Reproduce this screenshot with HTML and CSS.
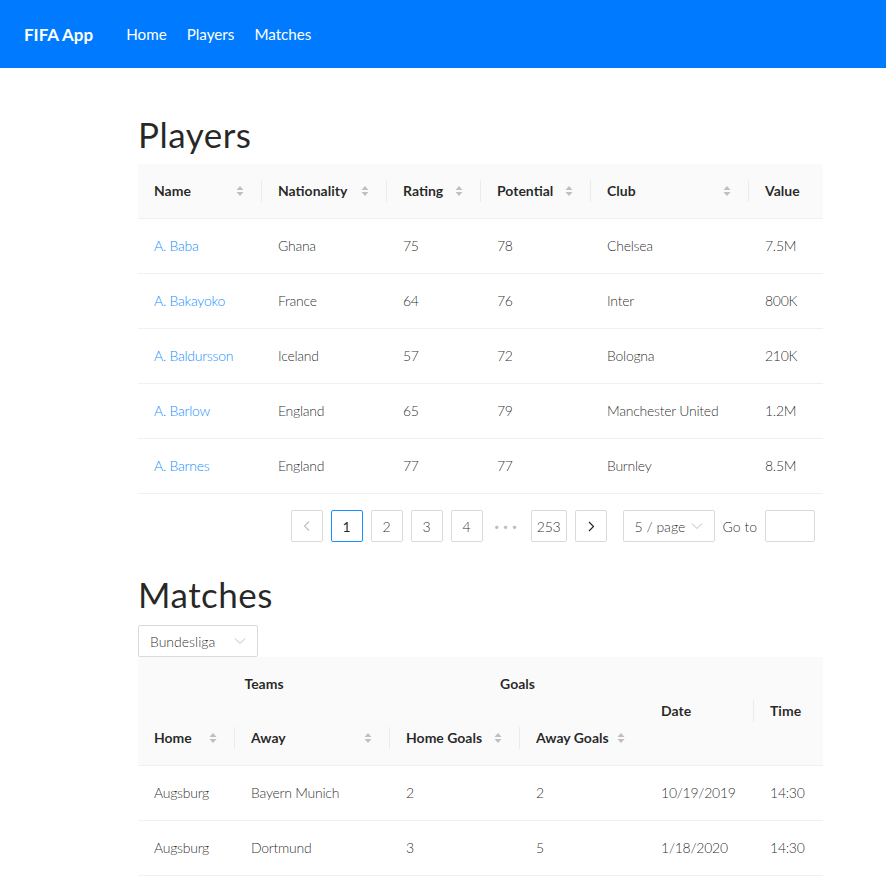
FILE: index.html
```html
<!DOCTYPE html>
<html lang="en">
<head>
<meta charset="utf-8">
<title>FIFA App</title>
<link rel="stylesheet" href="styles.css">
</head>
<body>
<nav class="navbar">
  <a class="brand" href="#">FIFA App</a>
  <a class="nav-link" href="#">Home</a>
  <a class="nav-link" href="#">Players</a>
  <a class="nav-link" href="#">Matches</a>
</nav>

<main class="content">
  <h1 class="title title-players">Players</h1>
  <table class="table players">
    <colgroup>
      <col style="width:124px"><col style="width:125px"><col style="width:94px"><col style="width:110px"><col style="width:158px"><col style="width:74px">
    </colgroup>
    <thead>
      <tr>
        <th class="div"><div class="th-in"><span>Name</span><span class="sorter"><svg width="8" height="12" viewBox="0 0 8 12"><path d="M0.5 5L4 1 7.5 5Z M0.5 7L4 11 7.5 7Z" fill="#bfbfbf"/></svg></span></div></th>
        <th class="div"><div class="th-in"><span>Nationality</span><span class="sorter"><svg width="8" height="12" viewBox="0 0 8 12"><path d="M0.5 5L4 1 7.5 5Z M0.5 7L4 11 7.5 7Z" fill="#bfbfbf"/></svg></span></div></th>
        <th class="div"><div class="th-in"><span>Rating</span><span class="sorter"><svg width="8" height="12" viewBox="0 0 8 12"><path d="M0.5 5L4 1 7.5 5Z M0.5 7L4 11 7.5 7Z" fill="#bfbfbf"/></svg></span></div></th>
        <th class="div"><div class="th-in"><span>Potential</span><span class="sorter"><svg width="8" height="12" viewBox="0 0 8 12"><path d="M0.5 5L4 1 7.5 5Z M0.5 7L4 11 7.5 7Z" fill="#bfbfbf"/></svg></span></div></th>
        <th class="div"><div class="th-in"><span>Club</span><span class="sorter"><svg width="8" height="12" viewBox="0 0 8 12"><path d="M0.5 5L4 1 7.5 5Z M0.5 7L4 11 7.5 7Z" fill="#bfbfbf"/></svg></span></div></th>
        <th><div class="th-in"><span>Value</span></div></th>
      </tr>
    </thead>
    <tbody>
      <tr><td><a href="#">A. Baba</a></td><td>Ghana</td><td>75</td><td>78</td><td>Chelsea</td><td>7.5M</td></tr>
      <tr><td><a href="#">A. Bakayoko</a></td><td>France</td><td>64</td><td>76</td><td>Inter</td><td>800K</td></tr>
      <tr><td><a href="#">A. Baldursson</a></td><td>Iceland</td><td>57</td><td>72</td><td>Bologna</td><td>210K</td></tr>
      <tr><td><a href="#">A. Barlow</a></td><td>England</td><td>65</td><td>79</td><td>Manchester United</td><td>1.2M</td></tr>
      <tr><td><a href="#">A. Barnes</a></td><td>England</td><td>77</td><td>77</td><td>Burnley</td><td>8.5M</td></tr>
    </tbody>
  </table>

  <div class="pagination">
    <span class="page-item disabled"><svg width="10" height="12" viewBox="0 0 10 12"><path d="M7 1.5L2.5 6 7 10.5" fill="none" stroke="currentColor" stroke-width="1.1"/></svg></span>
    <span class="page-item active">1</span>
    <span class="page-item">2</span>
    <span class="page-item">3</span>
    <span class="page-item">4</span>
    <span class="page-ellipsis">&bull;&bull;&bull;</span>
    <span class="page-item wide">253</span>
    <span class="page-item"><svg width="10" height="12" viewBox="0 0 10 12"><path d="M3 2L7.5 6.5 3 11" fill="none" stroke="currentColor" stroke-width="1.2"/></svg></span>
    <span class="size-select">5 / page<svg class="chev" width="12" height="8" viewBox="0 0 12 8"><path d="M1 1.5L6 6.5 11 1.5" fill="none" stroke="#bfbfbf" stroke-width="1"/></svg></span>
    <span class="goto">Go to</span>
    <span class="goto-input"></span>
  </div>

  <h1 class="title title-matches">Matches</h1>
  <div class="league-select">Bundesliga<svg class="chev" width="12" height="8" viewBox="0 0 12 8"><path d="M1 1.5L6 6.5 11 1.5" fill="none" stroke="#bfbfbf" stroke-width="1"/></svg></div>
  <table class="table matches">
    <colgroup>
      <col style="width:97px"><col style="width:155px"><col style="width:130px"><col style="width:125px"><col style="width:109px"><col style="width:69px">
    </colgroup>
    <thead>
      <tr>
        <th colspan="2" class="center top">Teams</th>
        <th colspan="2" class="center top">Goals</th>
        <th rowspan="2" class="div">Date</th>
        <th rowspan="2">Time</th>
      </tr>
      <tr>
        <th class="div"><div class="th-in"><span>Home</span><span class="sorter"><svg width="8" height="12" viewBox="0 0 8 12"><path d="M0.5 5L4 1 7.5 5Z M0.5 7L4 11 7.5 7Z" fill="#bfbfbf"/></svg></span></div></th>
        <th class="div"><div class="th-in"><span>Away</span><span class="sorter"><svg width="8" height="12" viewBox="0 0 8 12"><path d="M0.5 5L4 1 7.5 5Z M0.5 7L4 11 7.5 7Z" fill="#bfbfbf"/></svg></span></div></th>
        <th class="div"><div class="th-in"><span>Home Goals</span><span class="sorter"><svg width="8" height="12" viewBox="0 0 8 12"><path d="M0.5 5L4 1 7.5 5Z M0.5 7L4 11 7.5 7Z" fill="#bfbfbf"/></svg></span></div></th>
        <th><div class="th-in"><span>Away Goals</span><span class="sorter sorter-inline"><svg width="8" height="12" viewBox="0 0 8 12"><path d="M0.5 5L4 1 7.5 5Z M0.5 7L4 11 7.5 7Z" fill="#bfbfbf"/></svg></span></div></th>
      </tr>
    </thead>
    <tbody>
      <tr><td>Augsburg</td><td>Bayern Munich</td><td>2</td><td>2</td><td>10/19/2019</td><td>14:30</td></tr>
      <tr><td>Augsburg</td><td>Dortmund</td><td>3</td><td>5</td><td>1/18/2020</td><td>14:30</td></tr>
    </tbody>
  </table>
</main>
</body>
</html>
```

FILE: styles.css
```css
* { box-sizing: border-box; }

body {
  margin: 0;
  font-family: "Lato", "Liberation Sans", sans-serif;
  font-size: 14px;
  color: rgba(0, 0, 0, 0.85);
  background: #fff;
}

.navbar {
  height: 68px;
  background: #007bff;
  display: flex;
  align-items: center;
  padding: 0 24px;
  gap: 20px;
}

.navbar a {
  color: #fff;
  text-decoration: none;
}

.brand {
  font-weight: 700;
  font-size: 17px;
  margin-right: 13px;
}

.nav-link {
  font-size: 15.2px;
  font-weight: 400;
}

.content {
  margin-left: 138px;
  width: 685px;
  padding-bottom: 40px;
}

.title {
  font-family: "Lato", "Liberation Sans", sans-serif;
  font-weight: 400;
  font-size: 35px;
  letter-spacing: 0.5px;
  line-height: 40px;
  color: rgba(0, 0, 0, 0.85);
  margin: 0;
}

.title-players { padding-top: 46px; margin-bottom: 10px; }
.title-matches { padding-top: 32px; margin-bottom: 11px; }

.table {
  width: 685px;
  border-collapse: collapse;
  table-layout: fixed;
}

.table th {
  background: #fafafa;
  font-weight: 700;
  text-align: left;
  padding: 16px;
  line-height: 22px;
  position: relative;
  color: rgba(0, 0, 0, 0.85);
}

.table thead tr:last-child th,
.table th[rowspan] {
  border-bottom: 1px solid #f0f0f0;
}

.table th.div::before {
  content: "";
  position: absolute;
  right: 0;
  top: 50%;
  width: 1px;
  height: 22px;
  margin-top: -11px;
  background: rgba(0, 0, 0, 0.06);
}

.table th.center { text-align: center; }
.table th.top { border-bottom: none; }

.th-in {
  display: flex;
  justify-content: space-between;
  align-items: center;
}

.sorter { display: flex; align-items: center; margin-right: 2px; }
.sorter-inline { margin-left: 8px; margin-right: auto; }

.table td {
  padding: 16px;
  line-height: 22px;
  border-bottom: 1px solid #f0f0f0;
  font-weight: 300;
  letter-spacing: -0.25px;
  white-space: nowrap;
}

.table td a {
  color: #1890ff;
  text-decoration: none;
}

.pagination {
  display: flex;
  align-items: center;
  justify-content: flex-end;
  gap: 8px;
  margin: 16px 8px 0 0;
  height: 32px;
  font-weight: 300;
}

.page-item {
  min-width: 32px;
  height: 32px;
  border: 1px solid #d9d9d9;
  border-radius: 2px;
  display: flex;
  align-items: center;
  justify-content: center;
  color: rgba(0, 0, 0, 0.85);
  padding: 0 6px;
}

.page-item.wide { width: 36px; min-width: 36px; padding: 0; letter-spacing: -0.3px; }
.page-item.active { border-color: #1890ff; font-weight: 400; }
.page-item.disabled { color: rgba(0, 0, 0, 0.25); }

.page-ellipsis {
  width: 32px;
  text-align: center;
  color: rgba(0, 0, 0, 0.25);
  letter-spacing: 2px;
  font-size: 12px;
}

.size-select {
  width: 92px;
  height: 32px;
  border: 1px solid #d9d9d9;
  border-radius: 2px;
  display: flex;
  align-items: center;
  justify-content: space-between;
  padding: 0 11px;
  margin-left: 8px;
}

.goto-input {
  width: 50px;
  height: 32px;
  border: 1px solid #d9d9d9;
  border-radius: 2px;
}

.league-select {
  width: 120px;
  height: 32px;
  border: 1px solid #d9d9d9;
  border-radius: 2px;
  display: flex;
  align-items: center;
  justify-content: space-between;
  padding: 0 11px;
  font-weight: 300;
}
```
